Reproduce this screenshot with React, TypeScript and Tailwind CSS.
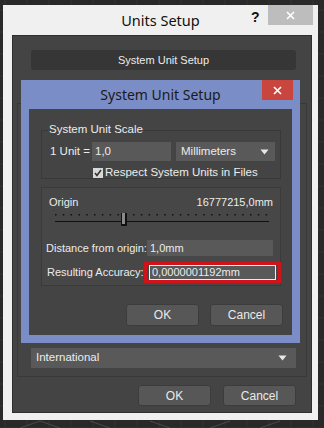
import React from "react";

const Caret = () => (
  <svg width="9" height="6" viewBox="0 0 9 6" className="shrink-0">
    <path d="M0.5 0.5 L8.5 0.5 L4.5 5.5 Z" fill="#e8e8e8" />
  </svg>
);

const Btn = ({ label, h = "h-[22px]" }: { label: string; h?: string }) => (
  <div className={`w-[73px] ${h} rounded-[3px] bg-[#575757] border border-[#3c3c3c] flex items-center justify-center text-[#eaeaea] text-[12px] whitespace-nowrap`}>
    {label}
  </div>
);

export default function App() {
  return (
    <div
      className="relative w-[324px] h-[428px] overflow-hidden bg-[#292929] whitespace-nowrap"
      style={{ fontFamily: '"Liberation Sans", Arial, sans-serif' }}
    >
      <svg className="absolute inset-0" width="324" height="428">
        {Array.from({ length: 16 }).map((_, i) => (
          <line key={"v" + i} x1={i * 22 + 5} y1="0" x2={i * 22 + 5} y2="428" stroke="#353535" strokeWidth="1" />
        ))}
        {Array.from({ length: 20 }).map((_, i) => (
          <line key={"h" + i} x1="0" y1={i * 22 + 10} x2="324" y2={i * 22 + 10} stroke="#353535" strokeWidth="1" />
        ))}
        <path d="M20 428 L40 421 L60 428 M90 421 L110 428 M150 421 L170 428 M210 428 L230 421 M260 428 L280 421" stroke="#4a4a4a" fill="none" />
      </svg>

      {/* outer window */}
      <div className="absolute left-[3px] top-[5px] w-[315px] h-[415px] bg-[#f0f0f0] flex flex-col">
        {/* title bar */}
        <div className="h-[30px] relative flex items-center justify-center">
          <span className="text-[14.5px] text-[#111] leading-none" style={{ fontFamily: '"Noto Sans", sans-serif' }}>Units Setup</span>
          <span className="absolute left-[248px] top-[5px] text-[14px] font-bold text-[#111] leading-none">?</span>
          <div className="absolute left-[265px] top-0 w-[45px] h-[20px] bg-[#bdbdbd] flex items-center justify-center">
            <svg width="9" height="9" viewBox="0 0 9 9">
              <path d="M1 1 L8 8 M8 1 L1 8" stroke="#fff" strokeWidth="1.6" />
            </svg>
          </div>
        </div>
        {/* content */}
        <div className="ml-[9px] w-[300px] h-[378px] bg-[#444444] border border-[#2f2f2f] flex flex-col">
          <div className="ml-[18px] mt-[14px] w-[265px] h-[20px] rounded-[3px] bg-[#363636] flex items-center justify-center text-[11px] text-[#ececec]">
            System Unit Setup
          </div>
          <div className="ml-[4px] mt-[33px] w-[290px] h-[274px] border border-[#393939] flex flex-col justify-end pb-[8px]">
            <div className="ml-[13px] w-[265px] h-[20px] bg-[#595959] flex items-center justify-between pl-[5px] pr-[9px] text-[11.5px] text-[#ececec]">
              <span>International</span>
              <Caret />
            </div>
          </div>
          <div className="mt-[8px] flex justify-end gap-[12px] pr-[15px]">
            <Btn label="OK" h="h-[21px]" />
            <Btn label="Cancel" h="h-[21px]" />
          </div>
        </div>
      </div>

      {/* blue dialog */}
      <div className="absolute left-[21px] top-[80px] w-[279px] h-[263px] bg-[#7a8dc6] flex flex-col">
        <div className="h-[29px] relative flex items-center justify-center">
          <span className="text-[14px] text-[#1a1a1a] leading-none" style={{ fontFamily: '"Noto Sans", sans-serif' }}>System Unit Setup</span>
          <div className="absolute left-[241px] top-0 w-[31px] h-[20px] bg-[#c9463f] flex items-center justify-center">
            <svg width="9" height="9" viewBox="0 0 9 9">
              <path d="M1 1 L8 8 M8 1 L1 8" stroke="#fff" strokeWidth="1.6" />
            </svg>
          </div>
        </div>
        <div className="mx-[8px] mb-[8px] flex-1 bg-[#444444] flex flex-col text-[11px] text-[#ececec] leading-none">
          {/* group 1 */}
          <div className="relative ml-[12px] mt-[21px] w-[240px] h-[49px] border border-[#393939] flex flex-col">
            <span className="absolute left-[6px] top-[-7px] bg-[#444444] px-[1px] leading-none text-[11.5px]">System Unit Scale</span>
            <div className="mt-[11px] flex items-center">
              <span className="ml-[8px] w-[42px] shrink-0 text-[11.5px]">1 Unit =</span>
              <div className="w-[79px] h-[19px] shrink-0 bg-[#595959] flex items-center pl-[3px] text-[11.5px]">1,0</div>
              <div className="ml-[5px] w-[99px] h-[19px] shrink-0 bg-[#595959] flex items-center justify-between pl-[5px] pr-[6px] text-[11.5px]">
                <span>Millimeters</span>
                <Caret />
              </div>
            </div>
            <div className="mt-[6px] ml-[51px] flex items-center gap-[2px]">
              <div className="w-[10px] h-[10px] bg-[#d8d8d8] flex items-center justify-center">
                <svg width="8" height="8" viewBox="0 0 8 8">
                  <path d="M1 4 L3 6.5 L7 1" stroke="#333" strokeWidth="1.6" fill="none" />
                </svg>
              </div>
              <span className="text-[11.5px]">Respect System Units in Files</span>
            </div>
          </div>
          {/* group 2 */}
          <div className="ml-[12px] mt-[8px] w-[240px] h-[99px] bg-[#474747] border border-[#3a3a3a] flex flex-col">
            <div className="mt-[9px] flex justify-between px-[7px]">
              <span>Origin</span>
              <span>16777215,0mm</span>
            </div>
            <div className="relative mt-[4px] ml-[13px] w-[216px] h-[15px]">
              <svg width="216" height="15" className="absolute inset-0">
                {Array.from({ length: 28 }).map((_, i) => (
                  <rect key={i} x={i * 7.8} y="2" width="1.5" height="1.5" fill="#111" />
                ))}
                <line x1="0" y1="9.5" x2="214" y2="9.5" stroke="#111" strokeWidth="1" />
                <rect x="66" y="1" width="6" height="13" fill="#111" />
                <rect x="67" y="1" width="3" height="11" fill="#8a8a8a" />
              </svg>
            </div>
            <div className="mt-[13px] flex items-center">
              <span className="ml-[4px] w-[101px] shrink-0">Distance from origin:</span>
              <div className="w-[126px] h-[16px] shrink-0 bg-[#595959] flex items-center pl-[3px]">1,0mm</div>
            </div>
            <div className="mt-[6px] flex items-center">
              <span className="ml-[5px] w-[97px] shrink-0">Resulting Accuracy:</span>
              <div className="w-[137px] h-[21px] shrink-0 border-[3px] border-[#d0121b] flex items-center justify-center">
                <div className="w-[127px] h-[15px] border border-[#f0f0f0] bg-[#595959] flex items-center pl-[2px]">0,0000001192mm</div>
              </div>
            </div>
          </div>
          <div className="mt-[18px] flex justify-end gap-[11px] pr-[9px]">
            <Btn label="OK" />
            <Btn label="Cancel" />
          </div>
        </div>
      </div>
    </div>
  );
}
